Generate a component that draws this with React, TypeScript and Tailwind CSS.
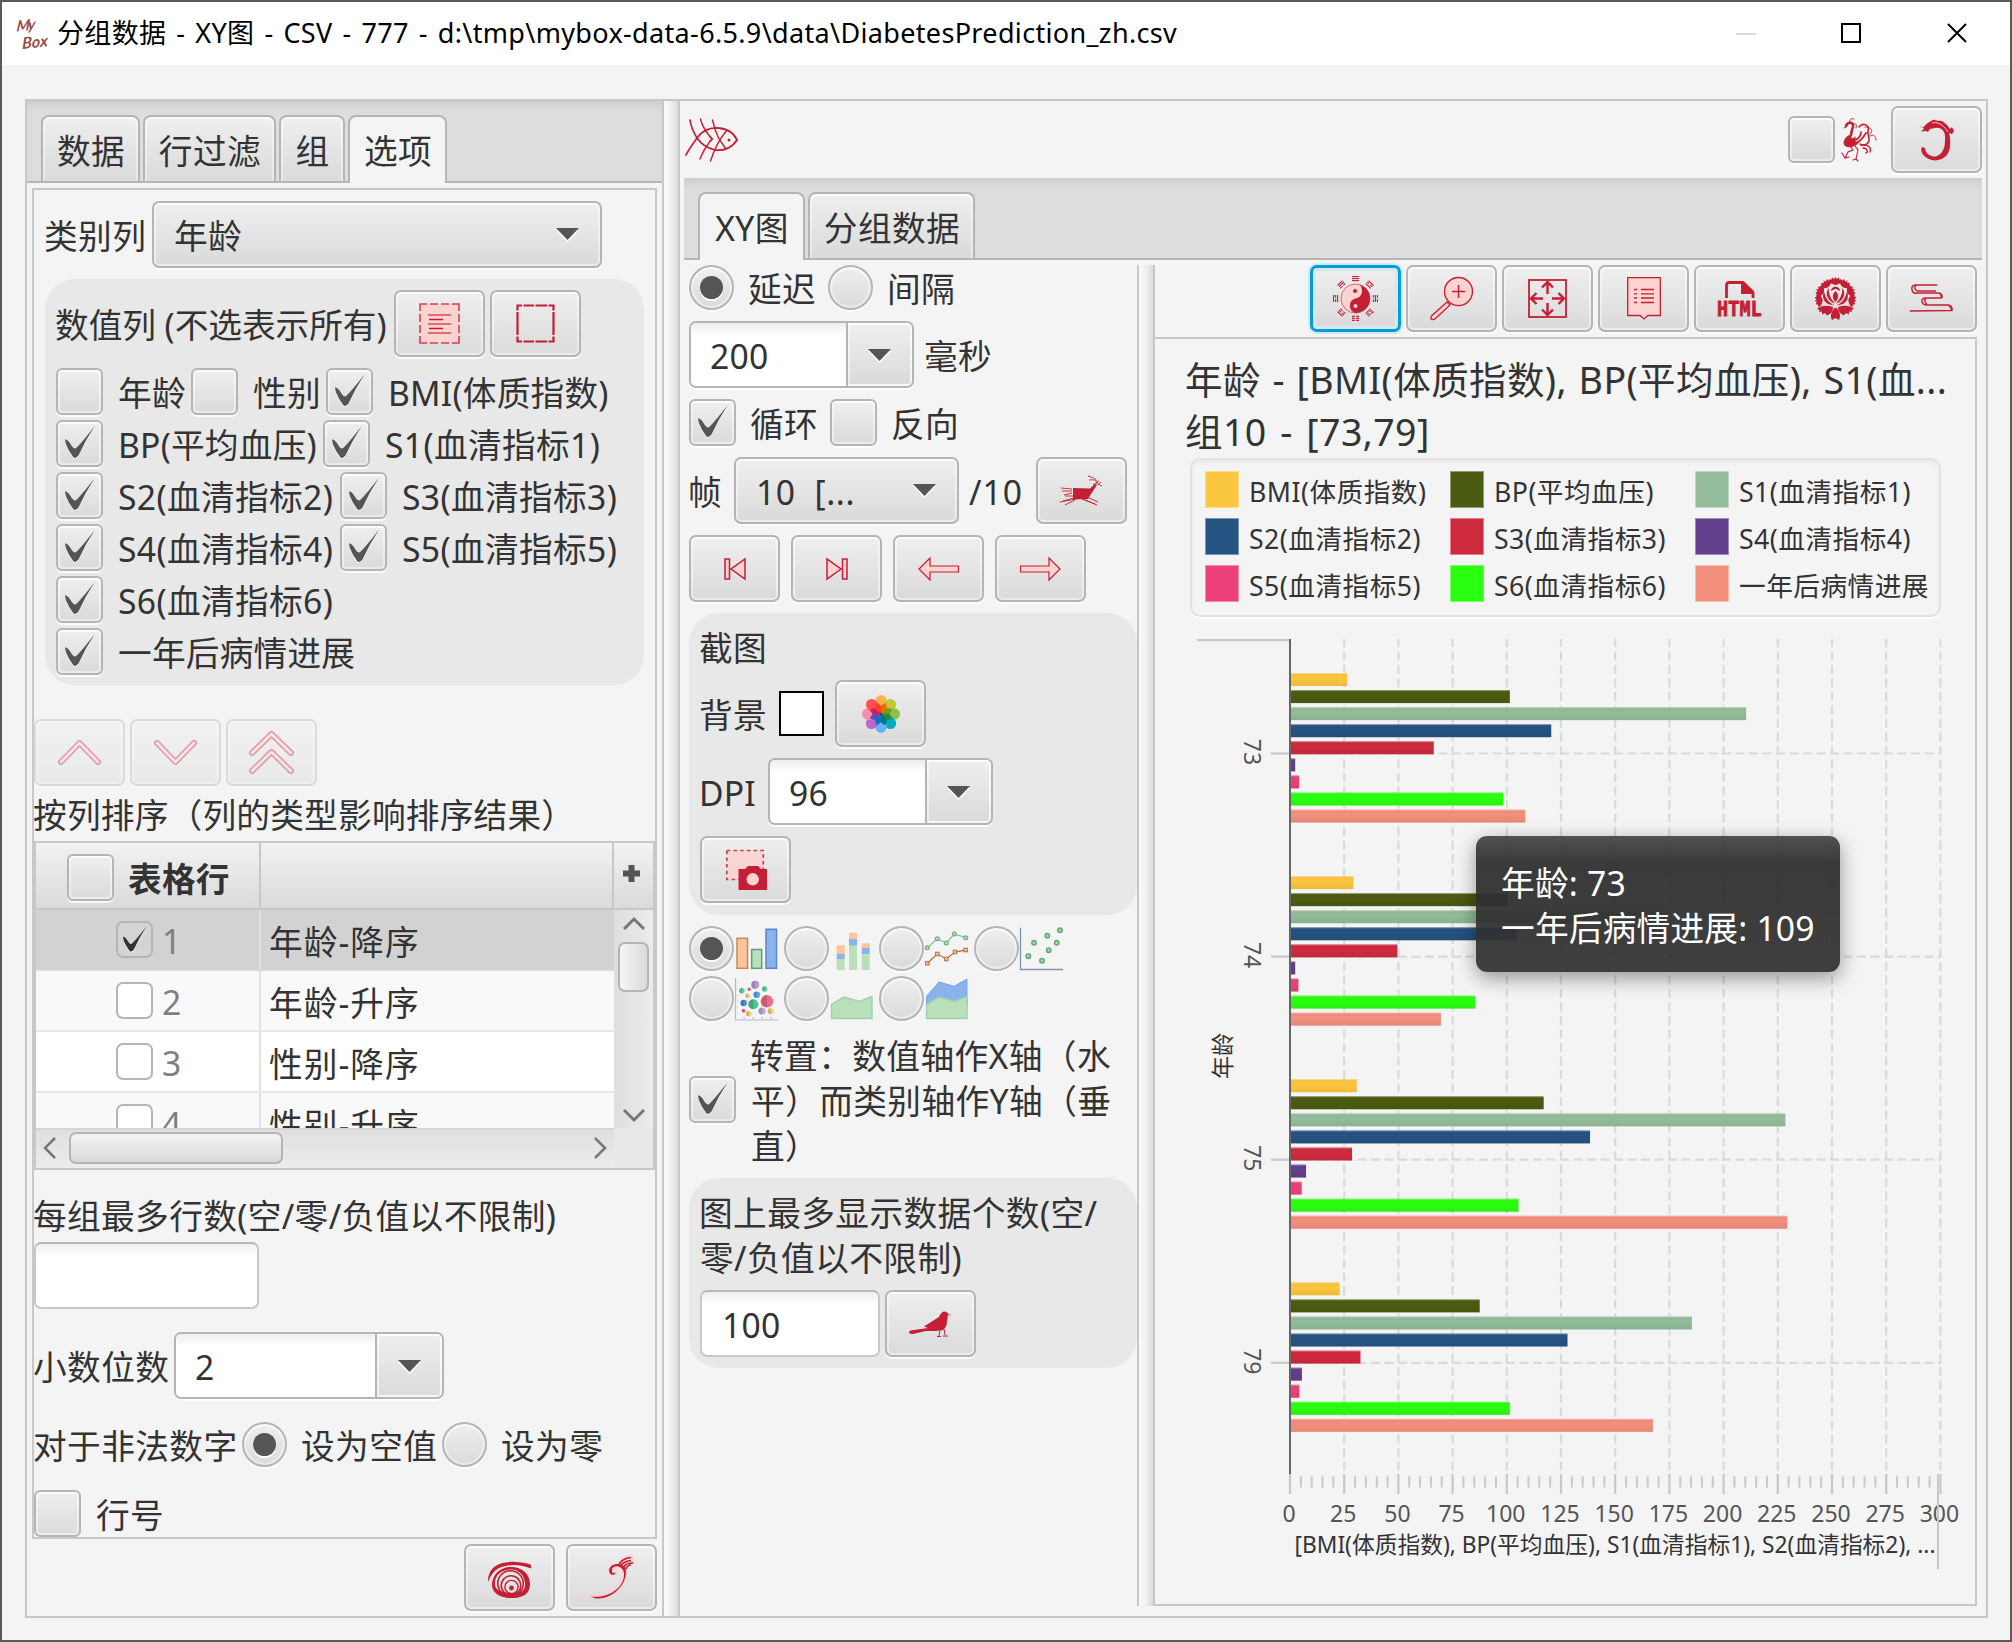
import type { ReactNode } from "react";
import clsx from "clsx";

const RED = "#c41f35";
const PINK = "#fcd3cf";

/* ---------- basic controls ---------- */

const raised =
  "border-2 border-[#b5b5b5] bg-linear-to-b from-[#efefef] to-[#dadada] shadow-[inset_0_0_0_2px_rgba(255,255,255,0.45),inset_0_2px_0_rgba(255,255,255,0.6),0_2px_0_rgba(255,255,255,0.8)]";

function T({ children, className }: { children: ReactNode; className?: string }) {
  return <span className={clsx("-indent-px block h-[45px] pt-[2px] leading-[45px] whitespace-nowrap", className)}>{children}</span>;
}

function Btn({ children, className, focused }: { children: ReactNode; className?: string; focused?: boolean }) {
  return (
    <button
      className={clsx(
        "flex h-[67px] w-[91px] shrink-0 items-center justify-center rounded-[7px]",
        focused
          ? "border-[3px] border-[#039ed3] bg-linear-to-b from-[#efefef] to-[#dadada] shadow-[0_0_0_2px_#cfe8f3,inset_0_0_0_3px_#d3e8f0]"
          : raised,
        className,
      )}
    >
      {children}
    </button>
  );
}

function Mark({ size = 30, color = "#555" }: { size?: number; color?: string }) {
  return (
    <svg width={size} height={size * 1.1} viewBox="0 0 30 33" preserveAspectRatio="none" className="shrink-0">
      <path
        d="M0 13.500Q2.500 13 5.500 18 8.500 23 10.500 22.500 15 19 29.800 0 20 15 13.500 29.500 11 33 8.500 31.500 4 26 .8 18Z"
        fill={color}
        style={{ filter: "drop-shadow(0 1px 0 #fff)" }}
      />
    </svg>
  );
}

function Check({ on, className }: { on?: boolean; className?: string }) {
  return (
    <span className={clsx("flex h-[47px] w-[47px] shrink-0 items-center justify-center rounded-[6px] pb-[2px] pl-px", raised, className)}>
      {on && <Mark />}
    </span>
  );
}

function Radio({ on, className }: { on?: boolean; className?: string }) {
  return (
    <span className={clsx("flex h-[45px] w-[45px] shrink-0 items-center justify-center rounded-full", raised, className)}>
      {on && <span className="h-[23px] w-[23px] rounded-full bg-[#555] shadow-[0_2px_0_#fff]" />}
    </span>
  );
}

function Arrow() {
  return (
    <svg width="23" height="14" viewBox="0 0 23 14" className="shrink-0">
      <path d="M0 2H23L11.500 14Z" fill="#fff" />
      <path d="M0 0H23L11.500 12Z" fill="#555" />
    </svg>
  );
}

function EditCombo({ value, className, field }: { value: string; className?: string; field: string }) {
  return (
    <div className={clsx("flex h-[67px] shrink-0 overflow-hidden rounded-[7px]", raised, className)}>
      <div
        className={clsx(
          "flex items-center border-r-2 border-[#b5b5b5] bg-linear-to-b from-[#eee] via-white via-20% to-white pl-[20px]",
          field,
        )}
      >
        <T className="pt-0">{value}</T>
      </div>
      <div className="flex flex-1 items-center justify-center pt-[2px] pr-px shadow-[inset_0_0_0_2px_rgba(255,255,255,0.5)]">
        <Arrow />
      </div>
    </div>
  );
}

function Input({ value, className }: { value?: string; className?: string }) {
  return (
    <div
      className={clsx(
        "flex h-[67px] shrink-0 items-center rounded-[7px] border-2 border-[#c8c8c8] border-t-[#b8b8b8] bg-linear-to-b from-[#eee] via-white via-20% to-white pl-[21px]",
        className,
      )}
    >
      <T className="pt-0">{value}</T>
    </div>
  );
}

function Tab({ label, active, className }: { label: string; active?: boolean; className?: string }) {
  return (
    <div
      className={clsx(
        "flex shrink-0 justify-center rounded-t-[8px] border-2 border-b-0 border-[#b5b5b5] pt-[10px] pl-[2px] tracking-[0.4px]",
        active
          ? "h-[68px] bg-[#f4f4f4]"
          : "mb-[2px] h-[66px] bg-linear-to-b from-[#efefef] to-[#dadada] shadow-[inset_0_2px_0_rgba(255,255,255,0.7),inset_2px_0_0_rgba(255,255,255,0.4),inset_-2px_0_0_rgba(255,255,255,0.4)]",
        className,
      )}
    >
      <T>{label}</T>
    </div>
  );
}

function TabBar({ children, className }: { children: ReactNode; className?: string }) {
  return (
    <div
      className={clsx(
        "flex h-[82px] shrink-0 items-end bg-[#ddd] shadow-[inset_0_-2px_0_#b5b5b5,inset_0_8px_8px_-4px_#cbcbcb]",
        className,
      )}
    >
      {children}
    </div>
  );
}

/* ---------- icons ---------- */

function Svg({ w, h, children, className }: { w: number; h: number; children: ReactNode; className?: string }) {
  return (
    <svg width={w} height={h} viewBox={`0 0 ${w} ${h}`} className={clsx("shrink-0 overflow-visible", className)} fill="none">
      {children}
    </svg>
  );
}

const SelectAll = () => (
  <Svg w={41} h={41}>
    <rect x="1" y="1" width="39" height="39" fill={PINK} />
    <g stroke={RED} strokeWidth="1.600">
      <path d="M1 8V1H8M11 1H19M22 1H30M33 1H40V8M40 11V19M40 22V30M40 33V40H33M30 40H22M19 40H11M8 40H1V33M1 30V22M1 19V11" opacity=".8" />
      <path d="M9 12H32M9 21H32M9 30H32" opacity=".75" />
      <path d="M10 16.500H24M10 25.500H24" strokeWidth="1.300" />
    </g>
  </Svg>
);

const SelectNone = () => (
  <Svg w={39} h={39}>
    <path
      d="M1.500 6.500V1.500H6M7.500 1.500H18M19.500 1.500H31M32.500 1.500H37.500V6.500M37.500 8V31M37.500 32.500V37.500H32.500M31 37.500H19.500M18 37.500H7.500M6 37.500H1.500V32.500M1.500 31V8"
      stroke={RED}
      strokeWidth="2.200"
    />
  </Svg>
);

function Chevron({ d, w, h }: { d: string; w: number; h: number }) {
  return (
    <Svg w={w} h={h}>
      <path d={d} stroke={RED} strokeWidth="6" strokeLinejoin="round" strokeLinecap="round" />
      <path d={d} stroke={PINK} strokeWidth="2.600" strokeLinejoin="round" strokeLinecap="round" />
    </Svg>
  );
}

const Shell = () => (
  <Svg w={43} h={47} className="mt-[5px]">
    <path d="M0 25C0 8 14 4 28 5 36 5.500 42 7 43 8V11.500C35 8.500 27 7 20 8.500 9 10 4 15 0 25Z" fill={RED} />
    <path
      d="M4 26C6 15 14 10 23 10 34 10 42 17 42 27 42 36 36 41 24 41 12 41 3 36 4 26ZM7 28C8 34 15 37 24 37 33 37 38 33 37 26 36 18 31 12.500 23 12.500 13 12.500 6 19 7 28Z"
      fill={RED}
    />
    <circle cx="22.500" cy="26.500" r="12.800" stroke={RED} strokeWidth="1.600" />
    <circle cx="23" cy="28.500" r="9.800" stroke={RED} strokeWidth="1.600" />
    <circle cx="23.500" cy="30" r="6.600" stroke={RED} strokeWidth="1.400" />
    <circle cx="23.500" cy="31" r="2.400" fill={RED} />
    <path d="M8 33C13 35 18 36 24 36S36 35 39 33C37 38 31 41 23 41S10 38 8 33Z" fill={RED} />
  </Svg>
);

const Fern = () => (
  <Svg w={43} h={42}>
    <g stroke={PINK} strokeWidth="6" opacity=".6" strokeLinecap="round">
      <path d="M1 40C18 42 34 30 35 15 35 8 22 6 21 13 21 17 25 17 26 15" />
      <path d="M31 8C32 4 36 1 41 0M34 10C36 7 39 4 43 4" />
    </g>
    <path d="M0 39.500C18 42 35 31 34 16 33 9 24 7 22 12 21 16 24 17 26 15.500 25 19 19 19 19 13 20 6 31 5 35 10 40 24 24 43 6 41.500Z" fill={RED} />
    <path d="M29 8C30 4 35 1 41 .5M31 8C34 5 37 4 41 3.500M34 10C35 7 39 6 43 6M36 12C37 9 39 8 41 8" stroke={RED} strokeWidth="1.700" />
  </Svg>
);

const Fish = () => (
  <Svg w={53} h={43}>
    <g stroke={RED} strokeWidth="1.400" strokeLinecap="round">
      <path d="M5 2C6 10 9 15 12 20 17 13 24 9.500 33 10 43 10.500 49 15 52 22 46 31 38 33 30 32 22 30 16 26 12 20 8 26 4 31 1 37" strokeWidth="1.700" />
      <path d="M52 22C48 14 40 10 30 10M52 22C47 30 38 33 30 32" strokeWidth="1.300" />
      <path d="M15.500 1C17 8 20 13 27 21 22 27 18 33 15 41" />
      <path d="M27.500 2C29 9 31 15 34 21L41 31M42 12C36 19 30 29 25.500 43" />
      <path d="M25 19L27.500 21 25 23" />
    </g>
    <circle cx="44" cy="22" r="1.500" fill={RED} />
  </Svg>
);

const Phoenix = () => (
  <Svg w={36} h={43}>
    <g stroke={RED} strokeLinecap="round">
      <path d="M5 8C7 3 13 4 12 9 10 13 11 16 9 19" strokeWidth="2.600" />
      <path d="M9 4C8 1 11 0 13 1M13 6C15 5 16 7 15 10M5 9L3 10" strokeWidth="1" />
      <path d="M18 9C22 4 29 7 27 13 26 17 29 20 28 23 26 28 21 28 19 26" strokeWidth="1.600" />
      <path d="M24 9C30 9 33 13 29 16M29 18C33 16 35 18 35 22" strokeWidth=".9" />
      <path d="M12 25C17 26 22 20 25 15M14 22C18 21 20 17 20 14" strokeWidth="1.700" />
      <path d="M20 27C26 26 31 29 29 34M22 30C26 30 28 34 25 35" strokeWidth="1.400" />
      <path d="M9 28L12 32 7 34 4 40M14 28L17 32 15 41M1 35L4 40 8 39M12 42L15 41 17 43" strokeWidth="1.100" />
    </g>
    <path d="M8 17C3 20 1 25 4 28 9 31 16 28 18 24 15 25 13 23 15 18 12 21 9 21 8 17Z" fill={RED} />
  </Svg>
);

const Dragon = () => (
  <Svg w={36} h={42}>
    <path
      d="M0 7L4 8.500 8 4.500 12 2 15 .5 17 1.500 23 2 28 6 31 10 33 8 35 12 33 15 30 14C32 21 32 30 28 36 23 42 14 43 8 39 3 36 1 31 3 28L6 29C6 34 11 38 16 37.500 23 36 26 30 26 21 27 13 23 8 16 9L11 10 9 13 7 12 2 12.500 5 9.500Z"
      fill={RED}
    />
    <path d="M13 4C18 2.500 24 5 29 13" stroke="#f6dada" strokeWidth=".9" />
  </Svg>
);

/* angle and the bars of each trigram, true for a broken bar */
const trigrams: [number, boolean[]][] = [
  [0, [false, false, false]],
  [45, [false, true, false]],
  [90, [true, false, true]],
  [135, [true, true, false]],
  [180, [true, true, true]],
  [225, [false, true, true]],
  [270, [false, true, false]],
  [315, [false, false, true]],
];

const YinYang = () => (
  <Svg w={45} h={45}>
    <circle cx="22.500" cy="22.500" r="14.500" fill={PINK} stroke={RED} strokeWidth=".6" />
    <path d="M27 8.700A14.500 14.500 0 0 1 22.500 37A7.500 7.500 0 0 1 22.500 22.500C29 21 31 15 27 8.700Z" fill={RED} />
    <circle cx="22" cy="15" r="2" fill={RED} />
    <circle cx="22.500" cy="30" r="2" fill={PINK} />
    {trigrams.map(([a, bars]) => (
      <g key={a} transform={`rotate(${a} 22.5 22.5)`} stroke={RED} strokeWidth="1.100">
        {bars.map((broken, i) => (
          <path key={i} d={broken ? `M19 ${0.6 + i * 2}h2.800M23.200 ${0.6 + i * 2}h2.800` : `M19 ${0.6 + i * 2}h7`} />
        ))}
      </g>
    ))}
  </Svg>
);

const Magnifier = () => (
  <Svg w={43} h={43}>
    <path d="M17 25L1.500 39Q0 42 2 42.500 4 43 6 41L20 28Z" fill={PINK} stroke={RED} strokeWidth="1.300" />
    <circle cx="28.500" cy="14.500" r="14" fill={PINK} stroke={RED} strokeWidth="1.400" />
    <path d="M22 14.500H35M28.500 8V21" stroke={RED} strokeWidth="1.500" />
  </Svg>
);

const Expand = () => (
  <Svg w={39} h={39}>
    <rect x="1" y="1" width="37" height="37" stroke={RED} strokeWidth="1.800" />
    <path
      d="M19.500 15V3M14 8.500L19.500 3 25 8.500M19.500 24V36M14 30.500L19.500 36 25 30.500M15 19.500H3M8.500 14L3 19.500 8.500 25M24 19.500H36M30.500 14L36 19.500 30.500 25"
      stroke={RED}
      strokeWidth="2.400"
    />
  </Svg>
);

const Note = () => (
  <Svg w={34} h={43}>
    <path d="M.7 .7H33.300V38.500H21L17 42 13 38.500H.700Z" fill={PINK} stroke={RED} strokeWidth="1.300" />
    <path d="M7 12.500H10M14 12.500H27M7 16.800H10M14 16.800H27M7 21H10M14 21H27M7 25.500H10M14 25.500H27" stroke={RED} strokeWidth="1.300" />
  </Svg>
);

const Html = () => (
  <Svg w={45} h={36}>
    <path d="M9.500 17V4Q9.500 1.500 12 1.500H26L36 11V17" stroke={RED} strokeWidth="2.800" />
    <path d="M25 1V12H36" fill={RED} stroke={RED} strokeWidth="2" />
    <text
      x="0"
      y="34.500"
      textLength="45"
      lengthAdjust="spacingAndGlyphs"
      fill={RED}
      fontSize="22"
      fontWeight="700"
      fontFamily="Liberation Mono, monospace"
      stroke={RED}
      strokeWidth=".9"
    >
      HTML
    </text>
  </Svg>
);

const Peony = () => (
  <Svg w={45} h={42}>
    {[0, 34, 66, 98, 262, 294, 326].map((a) => (
      <g key={a} transform={`rotate(${a} 22.5 20)`} fill={RED}>
        <path d="M22.500 7C19 6.500 16 4.500 16 1.500L18.300 2 19 -.5 21.500 1 22.500 -1.500 23.500 1 26 -.5 26.700 2 29 1.500C29 4.500 26 6.500 22.500 7Z" />
      </g>
    ))}
    <path d="M22.500 13C19 16 19 20.500 22.500 24 26 20.500 26 16 22.500 13ZM18 13C18 10.500 20 9 22.500 8.500 25 9 27 10.500 27 13L22.500 10.800Z" fill={RED} />
    <path
      d="M16 10C13 13 13 18 16 21.500 18 24 20 25 22 25.500 18 21 15 16 16 10ZM29 10C32 13 32 18 29 21.500 27 24 25 25 23 25.500 27 21 30 16 29 10ZM11 13C9 18 10 23 15 26L21 27.500C15 24 12 19 11 13ZM34 13C36 18 35 23 30 26L24 27.500C30 24 33 19 34 13Z"
      fill={RED}
    />
    <path
      d="M20 29C14 27 8 27 4 31L6.500 32 6 34 9 33.500 9 36.500 12 35 14 37.500C18 36 20 33 20 29ZM25 29C31 27 37 27 41 31L38.500 32 39 34 36 33.500 36 36.500 33 35 31 37.500C27 36 25 33 25 29ZM21.500 30C18 34 17 38 19 42L22.500 40 26 42C28 38 27 34 23.500 30Z"
      fill={RED}
    />
  </Svg>
);

const Stream = () => (
  <Svg w={43} h={29}>
    <path
      d="M27 1H5Q1 2 2 6T7 9H29Q32 11 31 14H15Q11 15 12 18T17 21H38Q42 23 41 26.500L0 27M6 2Q3 4 7 7H26M29 9Q33 10 32 14M16 14.500Q13 17 17 20M38 21Q43 22 42 27"
      stroke={RED}
      strokeWidth="1.400"
    />
  </Svg>
);

const Deer = () => (
  <Svg w={43} h={30}>
    <path d="M13 12L30 12.500 35 8 37 9 31 18 28 23 13 23.500Z" fill={RED} />
    <path
      d="M36 7L42 10M37 7C37 3 34 2 28 0M36 5C34 3 31 4 29 4M33 9L39 5M38 9L41 6M12 13L1 12M12 15L2 15M12 17L4 19M13 20L5 20M14 22L3 25M16 23L0 26M15 24L5 29M23 23L37 29M27 21L38 26M22 23L35 28"
      stroke={RED}
      strokeWidth=".9"
    />
  </Svg>
);

const Bird = () => (
  <Svg w={43} h={26}>
    <path d="M0 21Q1 19 5 19L19 17 15 15.500 22 11 30 6Q32 1 35 .5 39 1 39 3L43 4.500 39 4 38 10Q38 16 34 19L27 20 17 20 6 22.500Q0 24 0 21Z" fill={RED} />
    <path d="M31 19L30 25M28 25.500H32M35 18L36 24M34 25H39" stroke={RED} strokeWidth="1" />
  </Svg>
);

const petalColors: [string, string][] = [
  ["#ffb347", "#ee6c00"],
  ["#c0ca33", "#7a9a1e"],
  ["#8bc34a", "#2e8b3d"],
  ["#00acc1", "#00757a"],
  ["#64b5f6", "#1170c8"],
  ["#ba68c8", "#5a4fb5"],
  ["#f48fb1", "#d81b60"],
  ["#ff5252", "#f4432a"],
];

const Petals = () => (
  <Svg w={38} h={38}>
    {petalColors.map(([outer], i) => (
      <path
        key={outer}
        transform={`rotate(${i * 45} 19 19)`}
        d="M19 0A5.700 5.700 0 0 1 24.700 5.700V10L19 19 13.300 10V5.700A5.700 5.700 0 0 1 19 0Z"
        fill={outer}
      />
    ))}
    {petalColors.map(([outer, inner], i) => (
      <path key={outer} transform={`rotate(${i * 45 + 22.5} 19 19)`} d="M19 7C21.500 9.500 22.500 11 22 12.500L19 19 16 12.500C15.500 11 16.500 9.500 19 7Z" fill={inner} />
    ))}
    <circle cx="19" cy="19" r="1.200" fill="#444" />
  </Svg>
);

const Camera = () => (
  <Svg w={42} h={41}>
    <rect x="1.800" y="1.500" width="36.500" height="29" fill={PINK} stroke={RED} strokeWidth="1.700" strokeDasharray="3.500 3.200" opacity=".85" />
    <path d="M13.500 20H20L23 17H33L36 20H42V41H13.500Z" fill={RED} />
    <circle cx="27.700" cy="30.300" r="6.200" fill={PINK} />
  </Svg>
);

function PlayerIcon({ flip }: { flip?: boolean }) {
  return (
    <Svg w={22} h={22} className={flip ? "-scale-x-100" : ""}>
      <path d="M1 1H5.500V21H1ZM21 1V21L7 11Z" fill={PINK} stroke={RED} strokeWidth="1.500" />
    </Svg>
  );
}

function LongArrow({ flip }: { flip?: boolean }) {
  return (
    <Svg w={41} h={24} className={flip ? "-scale-x-100" : ""}>
      <path d="M1 12L12 1V9H40.500V15H12V23Z" fill={PINK} stroke={RED} strokeWidth="1.200" />
    </Svg>
  );
}

/* chart type pictograms, each on a 45px field */
const O = "#fec49a";
const G = "#b9e0bb";
const B = "#8ab3ee";

const chartIcons: ReactNode[] = [
  <>
    <rect x="3" y="11.300" width="10.500" height="30" fill={O} stroke="#c08a63" strokeWidth="1.500" />
    <rect x="17.700" y="22.500" width="10" height="18.800" fill={G} stroke="#5f9d77" strokeWidth="1.500" />
    <rect x="32" y="2.300" width="10.500" height="39" fill={B} stroke="#5b85cb" strokeWidth="1.500" />
  </>,
  <>
    <path d="M7.700 18.300h8v9h-8zM20 5.700h8v6h-8zM32.700 16.300h8v4.500h-8z" fill={O} />
    <path d="M7.700 27h8v5h-8zM20 11.700h8v7h-8zM32.700 20.700h8v6.600h-8z" fill={B} />
    <path d="M7.700 32h8v11h-8zM20 18.700h8V43h-8zM32.700 27.300h8V43h-8z" fill={G} />
  </>,
  <>
    <path d="M3.300 20.700L13.300 11.700 22.300 16 30.300 7 41.700 10.700" stroke="#8fbf9c" strokeWidth="1.300" />
    {[[3.3, 20.7], [13.3, 11.7], [22.3, 16], [30.3, 7], [41.7, 10.7]].map(([x, y]) => (
      <circle key={x} cx={x} cy={y} r="1.900" fill={G} stroke="#6fae83" strokeWidth="1.200" />
    ))}
    <path d="M3.300 36.300L13.300 27 22.300 32 31 25 41.700 23" stroke="#b5754c" strokeWidth="1.300" />
    {[[3.3, 36.3], [13.3, 27], [22.3, 32], [31, 25], [41.7, 23]].map(([x, y]) => (
      <rect key={x} x={x - 1.7} y={y - 1.7} width="3.400" height="3.400" fill={O} stroke="#c07a50" strokeWidth="1.200" />
    ))}
  </>,
  <>
    <path d="M1.500 .7V42.500H44" stroke="#7f90ab" strokeWidth="1.300" />
    {[[41, 3.3], [28.3, 8.7], [15, 15.7], [37.7, 15.7], [29.7, 23.3], [9.3, 29.3], [23, 33.7]].map(([x, y]) => (
      <circle key={x} cx={x} cy={y} r="2.200" fill="#a5d6ac" stroke="#63a878" strokeWidth="1.500" />
    ))}
  </>,
  <>
    <path d="M1.500 1V43H44" stroke="#b9b9d4" strokeWidth="1.200" />
    <path d="M3 6H4M3 12H4M3 18H4M3 24H4M3 30H4M3 36H4M10 40V42M19 40V42M28 40V42M37 40V42" stroke="#b9b9d4" strokeWidth="1.200" />
    {(
      [
        [21.3, 7.7, 4, "#b39ccf"], [30.7, 12, 2.7, "#5fcf9f"], [8, 13.7, 2.7, "#5fcf9f"], [15.3, 12.3, 1.7, "#ed6d87"],
        [13.7, 19, 2.3, "#f4cf74"], [22.7, 17.7, 3.3, "#5aa2ee"], [33, 24.3, 6.2, "#ed6d87"], [19.3, 27.3, 5, "#4fc593"],
        [9.7, 26, 3.2, "#4a8fd0"], [9.7, 33.7, 2, "#ed6d87"], [14.7, 36.7, 2.7, "#f4cf74"], [28, 34, 3.5, "#bba8da"], [36.7, 34.3, 3, "#f4cf74"],
      ] as [number, number, number, string][]
    ).map(([x, y, r, c]) => (
      <g key={`${x}-${y}`}>
        <circle cx={x} cy={y} r={r} fill={c} />
        <path d={`M${x} ${y - r}A${r} ${r} 0 0 0 ${x} ${y + r}Z`} fill="#00000026" />
      </g>
    ))}
  </>,
  <path d="M2.500 27.700L14.700 20 30.300 24.300 43 19.500V41.500H2.500Z" fill={G} stroke="#a0cfad" strokeWidth="1.400" />,
  <>
    <path d="M2.500 19.300L15 5 30 9.300 43 2V30H2.500Z" fill={B} stroke="#7ba5e0" />
    <path d="M2.500 27.700L14.700 20 30.300 24.300 43 19.500V41.500H2.500Z" fill={G} stroke="#a0cfad" strokeWidth="1.400" />
  </>,
];

/* ---------- left pane ---------- */

const series: [string, string][] = [
  ["BMI(体质指数)", "#fbc640"],
  ["BP(平均血压)", "#4b5b11"],
  ["S1(血清指标1)", "#93bc9a"],
  ["S2(血清指标2)", "#255382"],
  ["S3(血清指标3)", "#ce2a3d"],
  ["S4(血清指标4)", "#63408b"],
  ["S5(血清指标5)", "#ec4079"],
  ["S6(血清指标6)", "#2aff10"],
  ["一年后病情进展", "#f38f7d"],
];

const checkRows: [string, boolean, string][][] = [
  [["年龄", false, "w-[135px]"], ["性别", false, "w-[135px]"], ["BMI(体质指数)", true, ""]],
  [["BP(平均血压)", true, "w-[267px]"], ["S1(血清指标1)", true, ""]],
  [["S2(血清指标2)", true, "w-[284px]"], ["S3(血清指标3)", true, ""]],
  [["S4(血清指标4)", true, "w-[284px]"], ["S5(血清指标5)", true, ""]],
  [["S6(血清指标6)", true, ""]],
  [["一年后病情进展", true, ""]],
];

function Splitter({ className }: { className?: string }) {
  return (
    <div
      className={clsx(
        "w-[18px] shrink-0 border-x-2 border-[#c8c8c8] bg-linear-to-r from-[#fafafa] via-[#f0f0f0] to-[#dadada]",
        className,
      )}
    />
  );
}

function SortTable() {
  return (
    <div className="flex h-[329px] w-[621px] flex-col border-2 border-[#c8c8c8] bg-white">
      <div className="flex h-[67px] shrink-0 border-b-2 border-[#c8c8c8] bg-linear-to-b from-[#f2f2f2] to-[#dadada]">
        <div className="flex w-[225px] items-center border-r-2 border-[#c8c8c8] pl-[31px]">
          <Check className="mt-[3px]" />
          <T className="ml-[15px] pt-[4px] font-bold">表格行</T>
        </div>
        <div className="w-[353px] border-r-2 border-[#c8c8c8]" />
        <div className="flex flex-1 justify-center pt-[22px] pr-[4px]">
          <svg width="17" height="17" viewBox="0 0 17 17">
            <path d="M5.500 0h6v5.500H17v6h-5.500V17h-6v-5.500H0v-6h5.500Z" fill="#555" />
          </svg>
        </div>
      </div>
      <div className="flex h-[218px] shrink-0">
        <div className="w-[578px] overflow-hidden">
          {["年龄-降序", "年龄-升序", "性别-降序", "性别-升序"].map((t, i) => (
            <div
              key={t}
              className={clsx(
                "flex h-[61px] border-b-2",
                i === 0 ? "border-[#d9d9d9] bg-[#d2d2d2]" : i === 2 ? "border-[#e8e8e8] bg-white" : "border-[#e8e8e8] bg-[#f9f9f9]",
              )}
            >
              <div className="flex w-[225px] items-center border-r-2 border-[#e2e2e2] pl-[80px]">
                <span
                  className={clsx(
                    "flex h-[37px] w-[37px] items-center justify-center rounded-[7px] border-2 border-[#b5b5b5]",
                    i === 0 ? "bg-[#d4d4d4]" : "bg-white",
                  )}
                >
                  {i === 0 && <Mark size={24} color="#333" />}
                </span>
                <T className="ml-[10px] pt-[1px] text-[#7f7f7f]">{i + 1}</T>
              </div>
              <div className="flex items-center pl-[9px]">
                <T className="pt-[3px] tracking-[1px]">{t}</T>
              </div>
            </div>
          ))}
        </div>
        <div className="flex flex-1 flex-col items-center bg-linear-to-r from-[#dedede] to-[#ececec] pt-[7px]">
          <Svg w={22} h={13}>
            <path d="M1 12L11 2 21 12" stroke="#777" strokeWidth="3" />
          </Svg>
          <div className="mt-[12px] h-[50px] w-[31px] rounded-[7px] border-2 border-[#b5b5b5] bg-linear-to-r from-[#f6f6f6] to-[#dadada]" />
          <div className="mt-[117px]">
            <Svg w={22} h={13}>
              <path d="M1 1L11 11 21 1" stroke="#777" strokeWidth="3" />
            </Svg>
          </div>
        </div>
      </div>
      <div className="flex flex-1 bg-[#e8e8e8]">
        <div className="flex w-[578px] items-center justify-between border-t-2 border-[#d5d5d5] bg-linear-to-b from-[#dfdfdf] to-[#ececec] pr-[7px] pb-[2px] pl-[7px]">
          <div className="flex items-center gap-[13px]">
            <Svg w={13} h={22}>
              <path d="M12 1L2 11 12 21" stroke="#777" strokeWidth="2.500" />
            </Svg>
            <div className="h-[32px] w-[214px] rounded-[7px] border-2 border-[#b5b5b5] bg-linear-to-b from-[#f3f3f3] to-[#dadada]" />
          </div>
          <Svg w={13} h={22}>
            <path d="M1 1L11 11 1 21" stroke="#777" strokeWidth="2.500" />
          </Svg>
        </div>
      </div>
    </div>
  );
}

function LeftPane() {
  return (
    <div className="flex w-[635px] shrink-0 flex-col">
      <TabBar className="gap-[3px] pl-[14px]">
        <Tab label="数据" className="w-[99px]" />
        <Tab label="行过滤" className="w-[133px]" />
        <Tab label="组" className="w-[66px]" />
        <Tab label="选项" active className="w-[99px]" />
      </TabBar>
      <div className="mt-[5px] ml-[5px] flex h-[1351px] w-[625px] flex-col overflow-hidden border-2 border-[#c8c8c8]">
        <div className="mt-[11px] ml-[11px] flex h-[67px] items-center">
          <T className="w-[107px] tracking-[0.4px]">类别列</T>
          <div className={clsx("flex h-[67px] w-[450px] items-center justify-between rounded-[7px] pr-[21px] pl-[21px]", raised)}>
            <T className="tracking-[0.4px]">年龄</T>
            <Arrow />
          </div>
        </div>
        <div className="mt-[11px] ml-[11px] h-[408px] w-[599px] rounded-[30px] bg-[#e8e8e8] pt-[11px] pl-[11px]">
          <div className="flex h-[67px] items-center">
            <T className="w-[338px] tracking-[-0.05px]">数值列 (不选表示所有)</T>
            <Btn>
              <SelectAll />
            </Btn>
            <Btn className="ml-[5px]">
              <SelectNone />
            </Btn>
          </div>
          <div className="mt-[11px] flex flex-col gap-[5px]">
            {checkRows.map((row, i) => (
              <div key={i} className="flex h-[47px] items-center">
                {row.map(([label, on, w]) => (
                  <div key={label} className={clsx("flex shrink-0 items-center gap-[16px]", w)}>
                    <Check on={on} />
                    <T className={label.startsWith("S") ? "tracking-[0.35px]" : ""}>{label}</T>
                  </div>
                ))}
              </div>
            ))}
          </div>
        </div>
        <div className="mt-[34px] flex gap-[5px] opacity-40">
          <Btn>
            <Chevron w={43} h={25} d="M3 22L21.500 3 40 22" />
          </Btn>
          <Btn>
            <Chevron w={43} h={25} d="M3 3L21.500 22 40 3" />
          </Btn>
          <Btn>
            <Chevron w={45} h={45} d="M3 23L22.500 4 42 23M3 41L22.500 22 42 41" />
          </Btn>
        </div>
        <T className="mt-[5px]">按列排序（列的类型影响排序结果）</T>
        <div className="mt-[5px]">
          <SortTable />
        </div>
        <T className="mt-[22px] tracking-[0.35px]">每组最多行数(空/零/负值以不限制)</T>
        <Input className="mt-[5px] w-[225px]" />
        <div className="mt-[23px] flex h-[67px] items-center">
          <T className="w-[140px] tracking-[0.4px]">小数位数</T>
          <EditCombo value="2" className="w-[270px]" field="w-[201px]" />
        </div>
        <div className="mt-[23px] flex h-[45px] items-center tracking-[0.4px]">
          <T className="w-[208px]">对于非法数字</T>
          <Radio on />
          <T className="ml-[15px] w-[140px]">设为空值</T>
          <Radio />
          <T className="ml-[15px]">设为零</T>
        </div>
        <div className="mt-[23px] flex h-[47px] items-center gap-[16px]">
          <Check />
          <T>行号</T>
        </div>
      </div>
      <div className="mt-[5px] flex gap-[11px] self-end pr-[5px]">
        <Btn>
          <Shell />
        </Btn>
        <Btn>
          <Fern />
        </Btn>
      </div>
    </div>
  );
}

/* ---------- control column ---------- */

function Controls() {
  return (
    <div className="flex w-[453px] shrink-0 flex-col gap-[11px] pl-[5px]">
      <div className="flex h-[45px] items-center">
        <Radio on />
        <T className="ml-[15px] w-[79px] tracking-[0.4px]">延迟</T>
        <Radio />
        <T className="ml-[15px] tracking-[0.4px]">间隔</T>
      </div>
      <div className="flex items-center gap-[11px]">
        <EditCombo value="200" className="w-[225px]" field="w-[157px]" />
        <T className="tracking-[0.4px]">毫秒</T>
      </div>
      <div className="flex items-center">
        <Check on />
        <T className="ml-[15px] w-[79px]">循环</T>
        <Check />
        <T className="ml-[15px]">反向</T>
      </div>
      <div className="flex items-center">
        <T className="w-[45px]">帧</T>
        <div className={clsx("flex h-[67px] w-[225px] items-center justify-between rounded-[7px] pr-[21px] pl-[21px]", raised)}>
          <T className="pt-0 tracking-[0.6px] whitespace-pre">{"10  [..."}</T>
          <Arrow />
        </div>
        <T className="ml-[11px] w-[66px] pt-0 tracking-[1px]">/10</T>
        <Btn>
          <Deer />
        </Btn>
      </div>
      <div className="flex gap-[11px]">
        <Btn>
          <PlayerIcon />
        </Btn>
        <Btn>
          <PlayerIcon flip />
        </Btn>
        <Btn>
          <LongArrow />
        </Btn>
        <Btn>
          <LongArrow flip />
        </Btn>
      </div>
      <div className="flex h-[302px] flex-col gap-[11px] rounded-[30px] bg-[#e8e8e8] pt-[11px] pl-[11px]">
        <T className="tracking-[0.4px]">截图</T>
        <div className="flex items-center gap-[11px]">
          <T className="w-[68px] tracking-[0.4px]">背景</T>
          <span className="h-[45px] w-[45px] border-2 border-black bg-white" />
          <Btn>
            <Petals />
          </Btn>
        </div>
        <div className="flex items-center">
          <T className="w-[68px] pt-0">DPI</T>
          <EditCombo value="96" className="w-[225px]" field="w-[157px]" />
        </div>
        <Btn>
          <Camera />
        </Btn>
      </div>
      <div className="grid w-[380px] grid-cols-4 gap-y-[5px]">
        {chartIcons.map((icon, i) => (
          <div key={i} className="flex h-[45px] w-[95px] items-center">
            <Radio on={i === 0} />
            <Svg w={45} h={44}>
              {icon}
            </Svg>
          </div>
        ))}
      </div>
      <div className="flex h-[135px] items-center gap-[15px]">
        <Check on />
        <div className="-indent-px pt-[3px] leading-[45px] tracking-[0.400px] whitespace-nowrap">
          转置：数值轴作X轴（水
          <br />
          平）而类别轴作Y轴（垂
          <br />
          直）
        </div>
      </div>
      <div className="h-[190px] rounded-[30px] bg-[#e8e8e8] pt-[13px] pl-[11px]">
        <div className="-indent-px leading-[45px] tracking-[0.400px] whitespace-nowrap">
          图上最多显示数据个数(空/
          <br />
          零/负值以不限制)
        </div>
        <div className="mt-[9px] flex gap-[5px]">
          <Input value="100" className="w-[180px]" />
          <Btn>
            <Bird />
          </Btn>
        </div>
      </div>
    </div>
  );
}

/* ---------- chart ---------- */

const groups: [string, number[]][] = [
  ["73", [26.4, 101.4, 210.4, 120.5, 66.3, 2.4, 4.2, 98.4, 108.5]],
  ["74", [29.3, 100.5, 173, 104.5, 49.5, 2.4, 3.9, 85.4, 69.6]],
  ["75", [30.8, 117, 228.5, 138.4, 28.6, 7.4, 5.4, 105.4, 229.4]],
  ["79", [22.9, 87.5, 185.4, 128, 32.5, 5.5, 4.3, 101.4, 167.4]],
];

const X0 = 135;
const UNIT = 2.168;
const PLOT_H = 835;

function Chart() {
  return (
    <svg width="822" height="960" viewBox="0 0 822 960" className="block tracking-normal" fontSize="23">
      <defs>
        <linearGradient id="shade" x1="0" y1="0" x2="0" y2="1">
          <stop offset="0" stopColor="#000" stopOpacity=".04" />
          <stop offset=".4" stopColor="#000" stopOpacity="0" />
          <stop offset="1" stopColor="#000" stopOpacity=".06" />
        </linearGradient>
      </defs>
      {Array.from({ length: 12 }, (_, i) => X0 + (i + 1) * 25 * UNIT).map((x) => (
        <path key={x} d={`M${x} 0V${PLOT_H}`} stroke="#dadada" strokeWidth="2.200" strokeDasharray="9 4.500" strokeDashoffset="1" />
      ))}
      {groups.map(([name, values], g) => {
        const cy = 114.5 + g * 203.1;
        return (
          <g key={name}>
            <path d={`M${X0} ${cy}H${X0 + 651}`} stroke="#dadada" strokeWidth="2.200" strokeDasharray="9 4.500" />
            <path d={`M${X0 - 19} ${cy}H${X0}`} stroke="#c8c8c8" strokeWidth="2.200" />
            <text transform={`translate(${X0 - 46} ${cy - 1.5}) rotate(90)`} textAnchor="middle" fill="#555">
              {name}
            </text>
            {values.map((v, i) => (
              <g key={i} transform={`translate(${X0 + 1} ${34 + g * 203.1 + i * 17.07})`}>
                <rect width={v * UNIT - 1} height="13" fill={series[i][1]} />
                <rect width={v * UNIT - 1} height="13" fill="url(#shade)" />
                <path d={`M0 .5H${v * UNIT - 1}`} stroke="#fff" strokeOpacity=".35" />
              </g>
            ))}
          </g>
        );
      })}
      <path d={`M${X0 - 93} 1H${X0}`} stroke="#c8c8c8" strokeWidth="2.500" />
      <path d={`M${X0} 0V${PLOT_H}`} stroke="#666" strokeWidth="2" />
      {Array.from({ length: 61 }, (_, i) => i).map((i) => {
        const x = X0 + i * 5 * UNIT;
        return i % 5 === 0 ? (
          <g key={i}>
            <path d={`M${x} ${PLOT_H}V${PLOT_H + 20}`} stroke="#c8c8c8" strokeWidth="2.200" />
            <text x={x - 1} y={PLOT_H + 47.5} textAnchor="middle" fill="#555">
              {i * 5}
            </text>
          </g>
        ) : (
          <path key={i} d={`M${x} ${PLOT_H + 2.5}V${PLOT_H + 13.5}`} stroke="#c8c8c8" strokeWidth="2" />
        );
      })}
      <path d={`M783 ${PLOT_H}V${PLOT_H + 95}`} stroke="#c8c8c8" strokeWidth="2" />
      <text x="139.500" y="914" textLength="641" lengthAdjust="spacingAndGlyphs" fill="#333">
        [BMI(体质指数), BP(平均血压), S1(血清指标1), S2(血清指标2), ...
      </text>
      <text transform="translate(76 417) rotate(-90)" textAnchor="middle" fill="#333">
        年龄
      </text>
    </svg>
  );
}

function ChartPane() {
  return (
    <div className="flex min-w-0 flex-1 flex-col">
      <div className="mr-[5px] flex gap-[5px] self-end">
        <Btn focused>
          <YinYang />
        </Btn>
        <Btn>
          <Magnifier />
        </Btn>
        <Btn>
          <Expand />
        </Btn>
        <Btn>
          <Note />
        </Btn>
        <Btn>
          <Html />
        </Btn>
        <Btn>
          <Peony />
        </Btn>
        <Btn>
          <Stream />
        </Btn>
      </div>
      <div className="mt-[5px] mr-[5px] h-[1269px] border-2 border-l-0 border-[#c8c8c8]">
        <div className="h-[121px] pt-[15px] pl-[31px] -indent-px text-[37.500px] leading-[52px] tracking-[0.400px] whitespace-nowrap text-[#333]">
          <div className="[word-spacing:1.500px]">年龄 - [BMI(体质指数), BP(平均血压), S1(血...</div>
          <div className="[word-spacing:3.500px]">组10 - [73,79]</div>
        </div>
        <div className="mt-[-2px] ml-[35px] grid h-[159px] w-[751px] grid-cols-[245px_245px_auto] content-start gap-y-[10px] rounded-[10px] border-2 border-[#e2e2e2] pt-[11px] pl-[13px] text-[26.700px] tracking-[0.450px] shadow-[inset_0_3px_3px_#e9e9e9,0_2px_0_#fff]">
          {series.map(([name, color]) => (
            <div key={name} className="flex h-[37px] items-center gap-[11px]">
              <span
                className="h-[37px] w-[34px] shadow-[inset_0_0_0_1px_rgba(255,255,255,0.4)]"
                style={{ backgroundColor: color }}
              />
              <T className="pt-[1px]">{name}</T>
            </div>
          ))}
        </div>
        <div className="relative mt-[22px]">
          <Chart />
          <div className="absolute top-[197px] left-[321px] h-[136px] w-[364px] rounded-[11px] bg-linear-to-b from-[#454545]/93 via-[#2e2e2e]/94 via-20% to-[#333]/94 pt-[25px] pl-[25px] leading-[45px] tracking-[0.200px] whitespace-nowrap text-white shadow-[0_6px_20px_rgba(0,0,0,0.4)]">
            <div>年龄: 73</div>
            <div>一年后病情进展: 109</div>
          </div>
        </div>
      </div>
    </div>
  );
}

/* ---------- window ---------- */

function TitleBar() {
  return (
    <div className="flex h-[63px] shrink-0 items-center bg-white">
      <svg
        width="36"
        height="42"
        viewBox="0 0 36 42"
        className="ml-[17px] overflow-visible"
        fill="#9a4a48"
        fontFamily="Lato, sans-serif"
        fontStyle="italic"
        fontWeight="700"
      >
        <text x="1" y="18" fontSize="15" transform="rotate(-6 1 18) skewX(-12)" textLength="19">
          My
        </text>
        <text x="8" y="36" fontSize="16" transform="rotate(-6 3 36) skewX(-8)">
          Box
        </text>
      </svg>
      <span className="ml-[2px] text-[27px] tracking-[0.340px] whitespace-nowrap text-black [word-spacing:2.600px]">
        分组数据 - XY图 - CSV - 777 - d:\tmp\mybox-data-6.5.9\data\DiabetesPrediction_zh.csv
      </span>
      <svg width="232" height="24" viewBox="0 0 232 24" className="mr-[42px] ml-auto" fill="none">
        <path d="M0 12H20" stroke="#cfcfcf" strokeWidth="1.500" />
        <rect x="106" y="2" width="18" height="18" stroke="#000" strokeWidth="2" />
        <path d="M212 2L230 20M230 2L212 20" stroke="#000" strokeWidth="2" />
      </svg>
    </div>
  );
}

export default function App() {
  return (
    <div className="flex h-[1642px] w-[2012px] flex-col overflow-hidden border-2 border-[#5a5a5a] bg-[#f4f4f4] font-['Noto_Sans','Noto_Sans_CJK_SC',sans-serif] text-[33.700px] tracking-[0.200px] text-[#333]">
      <TitleBar />
      <div className="mt-[34px] ml-[23px] flex h-[1519px] w-[1963px] border-2 border-[#c8c8c8]">
        <LeftPane />
        <Splitter />
        <div className="flex min-w-0 flex-1 flex-col pl-[4px]">
          <div className="mt-[5px] flex h-[67px] items-center pr-[4px] pl-[1px]">
            <Fish />
            <Check className="ml-auto" />
            <span className="mr-[14px] ml-[6px]">
              <Phoenix />
            </span>
            <Btn>
              <Dragon />
            </Btn>
          </div>
          <TabBar className="mt-[5px] mr-[4px] gap-[3px] pl-[14px]">
            <Tab label="XY图" active className="w-[107px]" />
            <Tab label="分组数据" className="w-[167px]" />
          </TabBar>
          <div className="mt-[5px] flex h-[1341px] pr-[4px]">
            <Controls />
            <Splitter />
            <ChartPane />
          </div>
        </div>
      </div>
    </div>
  );
}
